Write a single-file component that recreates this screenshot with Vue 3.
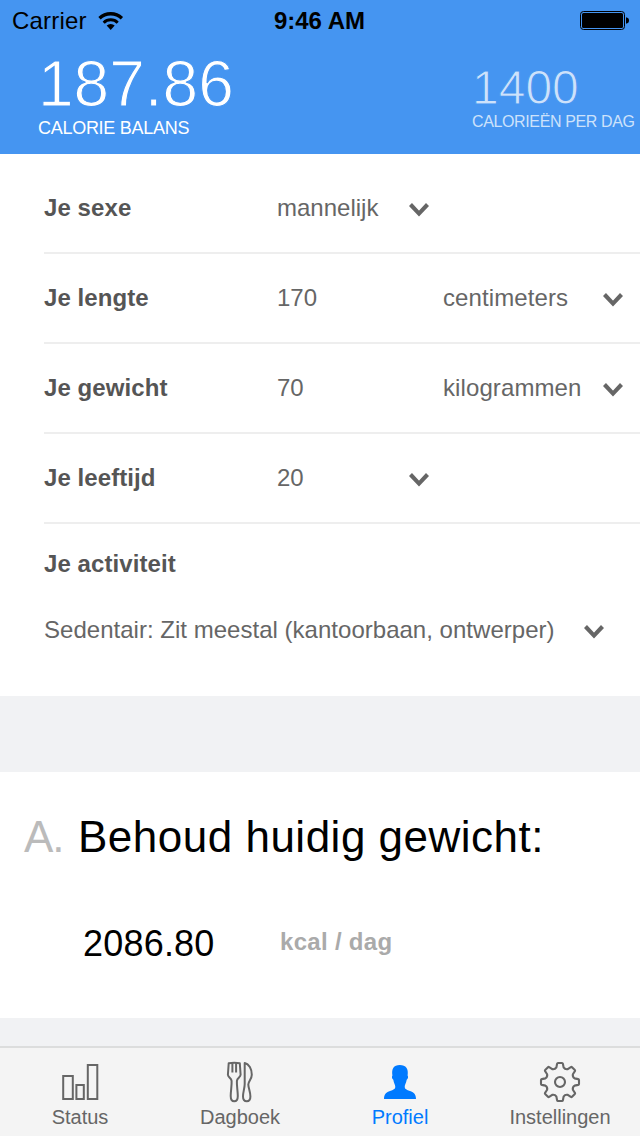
<script setup>
const rows = [
  { label: 'Je sexe', value: 'mannelijk', select: true },
  { label: 'Je lengte', value: '170', unit: 'centimeters' },
  { label: 'Je gewicht', value: '70', unit: 'kilogrammen' },
  { label: 'Je leeftijd', value: '20', select: true },
]

// Outline of an eight-toothed gear centred on the origin.
function gearPath() {
  const at = (x, y, a) =>
    `${(x * Math.cos(a) - y * Math.sin(a)).toFixed(2)} ${(x * Math.sin(a) + y * Math.cos(a)).toFixed(2)}`
  let d = ''
  for (let k = 0; k < 8; k++) {
    const a = (k * Math.PI) / 4
    d += (k ? 'L' : 'M') + at(-3.6, -14.6, a)
    d += 'L' + at(-2.9, -18.2, a) + 'Q' + at(-2.7, -19, a) + ' ' + at(-2, -19, a)
    d += 'L' + at(2, -19, a) + 'Q' + at(2.7, -19, a) + ' ' + at(2.9, -18.2, a)
    d += 'L' + at(3.6, -14.6, a)
    d += 'Q' + at(5.1, -12.3, a) + ' ' + at(-3.6, -14.6, a + Math.PI / 4)
  }
  return d + 'Z'
}
const gear = gearPath()
</script>

<template>
  <div class="screen">
    <header class="header">
      <div class="statusbar">
        <div class="carrier">
          <span>Carrier</span>
          <svg class="wifi" width="26" height="20" viewBox="0 0 26 20">
            <g fill="none" stroke="#000">
              <path d="M1.5 7.3a16 16 0 0 1 22.4 0" stroke-width="3.3" />
              <path d="M5.7 11.7a10 10 0 0 1 14 0" stroke-width="3" />
            </g>
            <path d="M8.7 14.6a5.6 5.6 0 0 1 8 0L12.7 19z" />
          </svg>
        </div>
        <div class="clock">9:46 AM</div>
        <div class="battery">
          <svg width="50" height="20" viewBox="0 0 50 20">
            <rect x=".5" y=".5" width="44" height="18" rx="3" fill="none" stroke="#000" />
            <rect x="2" y="2" width="41" height="15" rx="1.5" />
            <path d="M46 6.2q3 .6 3 3.3t-3 3.3z" />
          </svg>
        </div>
      </div>
      <div class="totals">
        <div class="balance">
          <div class="balance-value">187.86</div>
          <div class="balance-label">CALORIE BALANS</div>
        </div>
        <div class="daily">
          <div class="daily-value">1400</div>
          <div class="daily-label">CALORIEËN PER DAG</div>
        </div>
      </div>
    </header>

    <section class="form">
      <div v-for="row in rows" :key="row.label" class="row">
        <span class="label">{{ row.label }}</span>
        <span>{{ row.value }}</span>
        <span class="arrow">
          <svg v-if="row.select" width="20" height="14" viewBox="0 0 20 14">
            <path d="M1.5 1.5 10 10.6l8.5-9.1" fill="none" stroke="#666" stroke-width="4.1" />
          </svg>
        </span>
        <span class="measure">{{ row.unit }}</span>
        <span class="arrow">
          <svg v-if="row.unit" width="20" height="14" viewBox="0 0 20 14">
            <path d="M1.5 1.5 10 10.6l8.5-9.1" fill="none" stroke="#666" stroke-width="4.1" />
          </svg>
        </span>
      </div>
      <div class="activity">
        <div class="label">Je activiteit</div>
        <div class="activity-value">
          <span>Sedentair: Zit meestal (kantoorbaan, ontwerper)</span>
          <svg width="20" height="14" viewBox="0 0 20 14">
            <path d="M1.5 1.5 10 10.6l8.5-9.1" fill="none" stroke="#666" stroke-width="4.1" />
          </svg>
        </div>
      </div>
    </section>

    <section class="result">
      <h2 class="result-title"><span class="letter">A.</span><span>Behoud huidig gewicht:</span></h2>
      <div class="result-line">
        <span class="amount">2086.80</span>
        <span class="unit">kcal / dag</span>
      </div>
    </section>

    <nav class="tabs">
      <div class="tab">
        <svg width="40" height="42" viewBox="0 0 40 42" fill="none" stroke="#666" stroke-width="2">
          <rect x="3.2" y="15" width="9.6" height="23" />
          <rect x="16.4" y="24" width="7.4" height="14" />
          <rect x="27.8" y="4" width="9.5" height="34" />
        </svg>
        <span>Status</span>
      </div>
      <div class="tab">
        <svg width="28" height="42" viewBox="0 0 28 42" fill="none" stroke="#666" stroke-width="2" stroke-linejoin="round">
          <path d="M2.7 2.3Q8.2 1.4 13.8 2.3L14.6 13.8C14.4 16.5 11.3 17 10.9 19.8 10.6 24.5 11.8 30 11.8 35 11.8 39 10.6 40.3 8.2 40.3S4.7 39 4.7 35C4.7 30 5.9 24.5 5.6 19.8 5.2 17 2.1 16.5 1.9 13.8z" />
          <path d="M6.4 2.2v9.3M10.1 2.2v9.3" />
          <path d="M18.7 2C23 3 25.8 8 25.8 13.7 25.8 18 22.5 20 22.3 23.5 22.4 27 24.4 31 24.4 35.5 24.4 39 23 40.3 20.8 40.3S17 39 17 35.5C17 31 18.7 27 18.7 23z" />
        </svg>
        <span>Dagboek</span>
      </div>
      <div class="tab active">
        <svg width="32" height="42" viewBox="0 0 32 42" fill="#007aff">
          <path d="M0 38C.1 32.8 2.5 31.3 6 30 9.4 28.8 11.2 28.2 11.3 26 11.2 23.7 9.8 22.2 9.3 18.8 7.8 18 7.6 15.6 8.4 14.6 7.4 7.5 9.6 4 15.8 4S24.7 7.5 23.6 14.6C24.4 15.6 24.2 18 22.7 18.8 22.2 22.2 20.7 23.7 20.7 26 20.8 28.2 22.6 28.8 26 30 29.5 31.3 31.9 32.8 32 38z" />
        </svg>
        <span>Profiel</span>
      </div>
      <div class="tab">
        <svg width="42" height="42" viewBox="-21 -21 42 42" fill="none" stroke="#666" stroke-width="2.1" stroke-linejoin="round">
          <path :d="gear" />
          <circle r="5" />
        </svg>
        <span>Instellingen</span>
      </div>
    </nav>
  </div>
</template>

<style>
body { margin: 0; background: #f1f2f4; }
</style>

<style scoped>
.screen {
  width: 640px;
  height: 1136px;
  display: flex;
  flex-direction: column;
  overflow: hidden;
  background: #f1f2f4;
  color: #666;
  font: 24px/40px "Liberation Sans", Arial, Helvetica, sans-serif;
  white-space: nowrap;
}
svg { display: block; flex: none; }

.header { height: 154px; flex: none; background: #4595f1; color: #fff; }
.statusbar {
  display: grid;
  grid-template-columns: 1fr auto 1fr;
  height: 42px;
  padding: 0 11px 0 12px;
  color: #000;
  line-height: 42px;
}
.carrier { display: flex; letter-spacing: .2px; }
.wifi { margin: 11px 0 0 11px; }
.clock { margin-left: -2px; font-weight: bold; letter-spacing: 0; }
.battery { display: flex; justify-content: flex-end; padding-top: 11px; margin-right: -1px; }

.totals { display: flex; justify-content: space-between; padding: 10px 0 0 38px; }
.balance-value {
  font-size: 64px;
  line-height: 64px;
  -webkit-text-stroke: 1.1px #4595f1;
}
.balance-label { margin-top: 2px; font-size: 18px; line-height: 20px; letter-spacing: -.28px; }
.daily { width: 168px; padding-top: 11px; color: #cde2fb; }
.daily-value {
  font-size: 48px;
  line-height: 50px;
  -webkit-text-stroke: 1px #4595f1;
}
.daily-label { font-size: 16px; line-height: 18px; letter-spacing: -.37px; }

.form { height: 532px; flex: none; padding: 10px 0 0 44px; background: #fff; }
.row {
  display: grid;
  grid-template-columns: 233px 132px 34px 160px 20px;
  align-items: center;
  height: 88px;
  border-bottom: 2px solid #eee;
}
.label { color: #555; font-weight: bold; letter-spacing: .08px; }
.measure { letter-spacing: .1px; }
.arrow { padding-top: 4px; }
.activity { padding-top: 20px; }
.activity-value { display: flex; align-items: center; margin-top: 26px; letter-spacing: .02px; }
.activity-value svg { margin: 4px 0 0 29px; }

.result { height: 246px; flex: none; margin-top: 76px; background: #fff; color: #000; }
.result-title {
  display: flex;
  margin: 0;
  padding: 40px 0 0 24px;
  font-size: 44px;
  font-weight: normal;
  line-height: 50px;
  letter-spacing: .5px;
}
.letter { width: 54px; color: #bbb; letter-spacing: -1px; }
.result-line { display: flex; padding: 62px 0 0 83px; }
.amount { width: 197px; font-size: 36px; letter-spacing: .2px; }
.unit { margin-top: -2px; color: #aaa; font-weight: bold; letter-spacing: .3px; }

.tabs {
  display: grid;
  grid-template-columns: repeat(4, 1fr);
  height: 88px;
  margin-top: auto;
  border-top: 2px solid #dcdddd;
  background: #f4f4f4;
}
.tab {
  display: flex;
  flex-direction: column;
  align-items: center;
  padding-top: 13px;
  font-size: 20px;
  line-height: 28px;
}
.active { color: #007aff; }
</style>
